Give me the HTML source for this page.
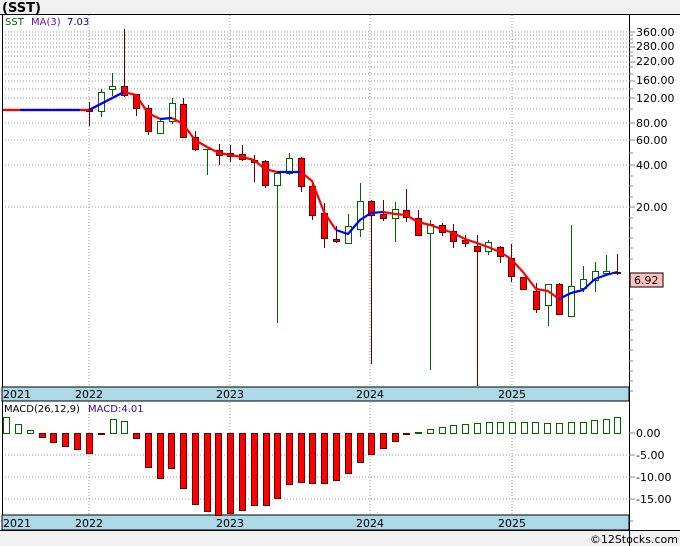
<!DOCTYPE html>
<html><head><meta charset="utf-8"><style>
html,body{margin:0;padding:0;background:#fff;}
svg{display:block;font-family:"DejaVu Sans","Liberation Sans",sans-serif;}
</style></head><body>
<svg width="680" height="546" viewBox="0 0 680 546" xmlns="http://www.w3.org/2000/svg">
<rect x="0" y="0" width="680" height="14" fill="#f0f0f0"/>
<rect x="0" y="530" width="680" height="16" fill="#f0f0f0"/>
<text x="2" y="12" font-size="13" font-weight="bold" fill="#000">(SST)</text>
<text x="678" y="543" font-size="11" text-anchor="end" fill="#000">©12Stocks.com</text>
<g shape-rendering="crispEdges">
<line x1="0" y1="14.5" x2="680" y2="14.5" stroke="#000"/>
<line x1="0" y1="530.5" x2="680" y2="530.5" stroke="#000"/>
<line x1="629.5" y1="14" x2="629.5" y2="546" stroke="#000"/>
<line x1="2.5" y1="14" x2="2.5" y2="530" stroke="#000"/>
<!-- grid -->
<g stroke="#999" stroke-dasharray="1,2">
<line x1="5" y1="32" x2="629" y2="32"/><line x1="5" y1="35" x2="629" y2="35"/><line x1="5" y1="39" x2="629" y2="39"/><line x1="5" y1="43" x2="629" y2="43"/><line x1="5" y1="47" x2="629" y2="47"/><line x1="5" y1="52" x2="629" y2="52"/><line x1="5" y1="56" x2="629" y2="56"/><line x1="5" y1="62" x2="629" y2="62"/><line x1="5" y1="67" x2="629" y2="67"/><line x1="5" y1="74" x2="629" y2="74"/><line x1="5" y1="81" x2="629" y2="81"/><line x1="5" y1="89" x2="629" y2="89"/><line x1="5" y1="98" x2="629" y2="98"/><line x1="5" y1="109" x2="629" y2="109"/><line x1="5" y1="123" x2="629" y2="123"/><line x1="5" y1="140" x2="629" y2="140"/><line x1="5" y1="165" x2="629" y2="165"/><line x1="5" y1="207" x2="629" y2="207"/>
<line x1="5" y1="455" x2="629" y2="455"/><line x1="5" y1="477" x2="629" y2="477"/><line x1="5" y1="499" x2="629" y2="499"/>
<line x1="89" y1="15" x2="89" y2="530"/><line x1="230" y1="15" x2="230" y2="530"/><line x1="370" y1="15" x2="370" y2="530"/><line x1="512" y1="15" x2="512" y2="530"/>
</g>
<!-- axis ticks -->
<g stroke="#888">
<line x1="629" y1="32" x2="635" y2="32"/><line x1="629" y1="35" x2="633" y2="35"/><line x1="629" y1="39" x2="633" y2="39"/><line x1="629" y1="43" x2="633" y2="43"/><line x1="629" y1="47" x2="635" y2="47"/><line x1="629" y1="52" x2="633" y2="52"/><line x1="629" y1="56" x2="633" y2="56"/><line x1="629" y1="62" x2="635" y2="62"/><line x1="629" y1="67" x2="633" y2="67"/><line x1="629" y1="74" x2="633" y2="74"/><line x1="629" y1="81" x2="635" y2="81"/><line x1="629" y1="89" x2="633" y2="89"/><line x1="629" y1="98" x2="635" y2="98"/><line x1="629" y1="109" x2="633" y2="109"/><line x1="629" y1="123" x2="635" y2="123"/><line x1="629" y1="140" x2="635" y2="140"/><line x1="629" y1="153" x2="633" y2="153"/><line x1="629" y1="165" x2="635" y2="165"/><line x1="629" y1="176" x2="633" y2="176"/><line x1="629" y1="186" x2="633" y2="186"/><line x1="629" y1="197" x2="633" y2="197"/><line x1="629" y1="207" x2="635" y2="207"/><line x1="629" y1="218" x2="633" y2="218"/><line x1="629" y1="228" x2="633" y2="228"/><line x1="629" y1="238" x2="633" y2="238"/><line x1="629" y1="248" x2="633" y2="248"/><line x1="629" y1="259" x2="633" y2="259"/><line x1="629" y1="279" x2="633" y2="279"/><line x1="629" y1="299" x2="633" y2="299"/><line x1="629" y1="310" x2="633" y2="310"/><line x1="629" y1="320" x2="633" y2="320"/><line x1="629" y1="330" x2="633" y2="330"/><line x1="629" y1="340" x2="633" y2="340"/><line x1="629" y1="350" x2="633" y2="350"/><line x1="629" y1="361" x2="633" y2="361"/><line x1="629" y1="371" x2="633" y2="371"/><line x1="629" y1="381" x2="633" y2="381"/><line x1="629" y1="391" x2="633" y2="391"/>
<line x1="629" y1="433" x2="635" y2="433"/><line x1="629" y1="455" x2="635" y2="455"/><line x1="629" y1="477" x2="635" y2="477"/><line x1="629" y1="499" x2="635" y2="499"/><line x1="629" y1="521" x2="633" y2="521"/>
</g>
<!-- x bands -->
<rect x="2" y="387" width="627" height="14" fill="#add8e6" stroke="#000"/>
<rect x="2" y="515" width="627" height="15" fill="#add8e6" stroke="#000"/>
</g>
<g font-size="11" fill="#000">
<text x="3" y="398">2021</text><text x="75" y="398">2022</text><text x="216" y="398">2023</text><text x="356" y="398">2024</text><text x="498" y="398">2025</text>
<text x="3" y="527">2021</text><text x="75" y="527">2022</text><text x="216" y="527">2023</text><text x="356" y="527">2024</text><text x="498" y="527">2025</text>
<text x="636" y="36">360.00</text><text x="636" y="50">280.00</text><text x="636" y="65">220.00</text><text x="636" y="84">160.00</text><text x="636" y="102">120.00</text><text x="636" y="127">80.00</text><text x="636" y="144">60.00</text><text x="636" y="169">40.00</text><text x="636" y="211">20.00</text>
<text x="636" y="437">0.00</text><text x="636" y="459">-5.00</text><text x="636" y="481">-10.00</text><text x="636" y="503">-15.00</text>
</g>
<rect x="630" y="273" width="33" height="14" fill="#ffc0c0" stroke="#000" shape-rendering="crispEdges"/>
<text x="634" y="284" font-size="11">6.92</text>
<g font-size="10">
<text x="5" y="25" fill="#006400">SST</text><text x="31" y="25" fill="#6a0dad">MA(3)</text><text x="67" y="25" fill="#0000cc">7.03</text>
<text x="4" y="412" fill="#000">MACD(26,12,9)</text><text x="88" y="412" fill="#4b0082">MACD:4.01</text>
</g>
<!-- candles -->
<g shape-rendering="crispEdges" stroke-width="1">
<g stroke="#600">
<line x1="89.5" y1="102" x2="89.5" y2="126"/><line x1="124.5" y1="29" x2="124.5" y2="97"/><line x1="136.5" y1="94" x2="136.5" y2="116"/><line x1="148.5" y1="105" x2="148.5" y2="135"/><line x1="183.5" y1="98" x2="183.5" y2="138"/><line x1="195.5" y1="131" x2="195.5" y2="151"/><line x1="219.5" y1="144" x2="219.5" y2="165"/><line x1="230.5" y1="145" x2="230.5" y2="162"/><line x1="242.5" y1="145" x2="242.5" y2="161"/><line x1="254.5" y1="155" x2="254.5" y2="182"/><line x1="265.5" y1="160" x2="265.5" y2="188"/><line x1="301.5" y1="157" x2="301.5" y2="192"/><line x1="312.5" y1="183" x2="312.5" y2="220"/><line x1="324.5" y1="203" x2="324.5" y2="248"/><line x1="336.5" y1="226" x2="336.5" y2="243"/><line x1="371.5" y1="200" x2="371.5" y2="364"/><line x1="383.5" y1="200" x2="383.5" y2="221"/><line x1="406.5" y1="189" x2="406.5" y2="222"/><line x1="418.5" y1="210" x2="418.5" y2="235"/><line x1="442.5" y1="223" x2="442.5" y2="236"/><line x1="453.5" y1="224" x2="453.5" y2="248"/><line x1="465.5" y1="235" x2="465.5" y2="247"/><line x1="477.5" y1="235" x2="477.5" y2="386"/><line x1="500.5" y1="246" x2="500.5" y2="263"/><line x1="511.5" y1="244" x2="511.5" y2="282"/><line x1="523.5" y1="277" x2="523.5" y2="289"/><line x1="536.5" y1="283" x2="536.5" y2="313"/><line x1="559.5" y1="283" x2="559.5" y2="315"/><line x1="617.5" y1="254" x2="617.5" y2="275"/>
</g>
<g stroke="#060">
<line x1="101.5" y1="89" x2="101.5" y2="117"/><line x1="112.5" y1="73" x2="112.5" y2="96"/><line x1="160.5" y1="118" x2="160.5" y2="134"/><line x1="172.5" y1="98" x2="172.5" y2="124"/><line x1="207.5" y1="149" x2="207.5" y2="175"/><line x1="277.5" y1="171" x2="277.5" y2="323"/><line x1="289.5" y1="153" x2="289.5" y2="175"/><line x1="348.5" y1="214" x2="348.5" y2="244"/><line x1="360.5" y1="183" x2="360.5" y2="237"/><line x1="395.5" y1="202" x2="395.5" y2="242"/><line x1="430.5" y1="220" x2="430.5" y2="370"/><line x1="488.5" y1="240" x2="488.5" y2="255"/><line x1="548.5" y1="284" x2="548.5" y2="326"/><line x1="571.5" y1="225" x2="571.5" y2="316"/><line x1="583.5" y1="266" x2="583.5" y2="292"/><line x1="595.5" y1="262" x2="595.5" y2="292"/><line x1="606.5" y1="255" x2="606.5" y2="275"/>
<line x1="203" y1="149.5" x2="212" y2="149.5"/>
</g>
<g fill="#f00" stroke="#600">
<rect x="86.5" y="109.5" width="6" height="2"/><rect x="121.5" y="86.5" width="6" height="9"/><rect x="133.5" y="94.5" width="6" height="14"/><rect x="145.5" y="108.5" width="6" height="23"/><rect x="180.5" y="104.5" width="6" height="33"/><rect x="192.5" y="137.5" width="6" height="12"/><rect x="216.5" y="150.5" width="6" height="5"/><rect x="227.5" y="153.5" width="6" height="3"/><rect x="239.5" y="154.5" width="6" height="5"/><rect x="251.5" y="160.5" width="6" height="2"/><rect x="262.5" y="161.5" width="6" height="24"/><rect x="298.5" y="158.5" width="6" height="28"/><rect x="309.5" y="186.5" width="6" height="29"/><rect x="321.5" y="213.5" width="6" height="25"/><rect x="333.5" y="239.5" width="6" height="2"/><rect x="368.5" y="201.5" width="6" height="14"/><rect x="380.5" y="214.5" width="6" height="4"/><rect x="403.5" y="210.5" width="6" height="7"/><rect x="415.5" y="218.5" width="6" height="17"/><rect x="439.5" y="225.5" width="6" height="7"/><rect x="450.5" y="231.5" width="6" height="10"/><rect x="462.5" y="240.5" width="6" height="3"/><rect x="474.5" y="246.5" width="6" height="5"/><rect x="497.5" y="247.5" width="6" height="9"/><rect x="508.5" y="258.5" width="6" height="18"/><rect x="520.5" y="277.5" width="6" height="12"/><rect x="533.5" y="291.5" width="6" height="18"/><rect x="556.5" y="284.5" width="6" height="30"/><rect x="614.5" y="272.5" width="6" height="1"/>
</g>
<g fill="#fff" stroke="#060">
<rect x="98.5" y="92.5" width="6" height="19"/><rect x="109.5" y="86.5" width="6" height="3"/><rect x="157.5" y="121.5" width="6" height="12"/><rect x="169.5" y="103.5" width="6" height="18"/><rect x="274.5" y="173.5" width="6" height="12"/><rect x="286.5" y="158.5" width="6" height="15"/><rect x="345.5" y="226.5" width="6" height="17"/><rect x="357.5" y="201.5" width="6" height="28"/><rect x="392.5" y="209.5" width="6" height="9"/><rect x="427.5" y="224.5" width="6" height="9"/><rect x="485.5" y="242.5" width="6" height="9"/><rect x="545.5" y="284.5" width="6" height="21"/><rect x="568.5" y="286.5" width="6" height="30"/><rect x="580.5" y="279.5" width="6" height="9"/><rect x="592.5" y="271.5" width="6" height="9"/><rect x="603.5" y="271.5" width="6" height="2"/>
</g>
</g>
<!-- MA line -->
<g fill="none" stroke-width="2.2" stroke-linejoin="round">
<polyline stroke="#f00" points="3,110 89,110 124,92 136,95 148,113 160,119"/>
<polyline stroke="#f00" points="172,118 183,124 195,140 207,147 219,153 230,155 242,157 254,160 265,169 277,172"/>
<polyline stroke="#f00" points="301,172 312,181 324,212 336,230"/>
<polyline stroke="#f00" points="383,212 395,214 406,215 418,222 430,225 442,229 453,233 465,239 477,243 488,247 500,252 511,259 523,272 536,289 548,291 559,299"/>
<polyline stroke="#00f" points="20,110 80,110"/>
<polyline stroke="#00f" points="89,110 124,92"/>
<polyline stroke="#00f" points="160,119 172,118"/>
<polyline stroke="#00f" points="277,172 289,172 301,172"/>
<polyline stroke="#00f" points="336,230 348,234 360,220 371,213 383,212"/>
<polyline stroke="#00f" points="559,299 571,293 583,290 595,279 606,275 617,272"/>
</g>
<!-- MACD bars -->
<g shape-rendering="crispEdges">
<g fill="#fff" stroke="#060">
<rect x="3.5" y="417.5" width="6" height="16"/><rect x="15.5" y="424.5" width="6" height="9"/><rect x="27.5" y="430.5" width="6" height="3"/><rect x="110.5" y="419.5" width="6" height="14"/><rect x="121.5" y="421.5" width="6" height="12"/>
<rect x="427.5" y="429.5" width="6" height="4"/><rect x="439.5" y="427.5" width="6" height="6"/><rect x="450.5" y="425.5" width="6" height="8"/><rect x="462.5" y="424.5" width="6" height="9"/><rect x="474.5" y="423.5" width="6" height="10"/><rect x="486.5" y="422.5" width="6" height="11"/><rect x="497.5" y="422.5" width="6" height="11"/><rect x="509.5" y="422.5" width="6" height="11"/><rect x="521.5" y="422.5" width="6" height="11"/><rect x="532.5" y="422.5" width="6" height="11"/><rect x="544.5" y="423.5" width="6" height="10"/><rect x="556.5" y="423.5" width="6" height="10"/><rect x="568.5" y="422.5" width="6" height="11"/><rect x="580.5" y="422.5" width="6" height="11"/><rect x="591.5" y="420.5" width="6" height="13"/><rect x="603.5" y="419.5" width="6" height="14"/><rect x="614.5" y="417.5" width="6" height="16"/>
</g>
<rect x="415" y="432" width="7" height="2" fill="#060"/>
<rect x="98" y="433" width="7" height="2" fill="#600"/><rect x="403" y="433" width="7" height="2" fill="#600"/>
<g fill="#f00" stroke="#600">
<rect x="39.5" y="433.5" width="6" height="4"/><rect x="50.5" y="433.5" width="6" height="9"/><rect x="62.5" y="433.5" width="6" height="13"/><rect x="74.5" y="433.5" width="6" height="16"/><rect x="86.5" y="433.5" width="6" height="20"/><rect x="133.5" y="433.5" width="6" height="5"/><rect x="145.5" y="433.5" width="6" height="34"/><rect x="157.5" y="433.5" width="6" height="45"/><rect x="168.5" y="433.5" width="6" height="35"/><rect x="180.5" y="433.5" width="6" height="55"/><rect x="192.5" y="433.5" width="6" height="71"/><rect x="204.5" y="433.5" width="6" height="78"/><rect x="215.5" y="433.5" width="6" height="82"/><rect x="227.5" y="433.5" width="6" height="80"/><rect x="239.5" y="433.5" width="6" height="77"/><rect x="251.5" y="433.5" width="6" height="72"/><rect x="263.5" y="433.5" width="6" height="72"/><rect x="274.5" y="433.5" width="6" height="65"/><rect x="286.5" y="433.5" width="6" height="51"/><rect x="298.5" y="433.5" width="6" height="49"/><rect x="309.5" y="433.5" width="6" height="50"/><rect x="321.5" y="433.5" width="6" height="50"/><rect x="333.5" y="433.5" width="6" height="47"/><rect x="345.5" y="433.5" width="6" height="40"/><rect x="357.5" y="433.5" width="6" height="29"/><rect x="368.5" y="433.5" width="6" height="21"/><rect x="380.5" y="433.5" width="6" height="15"/><rect x="392.5" y="433.5" width="6" height="8"/>
</g>
</g>
</svg>
</body></html>
